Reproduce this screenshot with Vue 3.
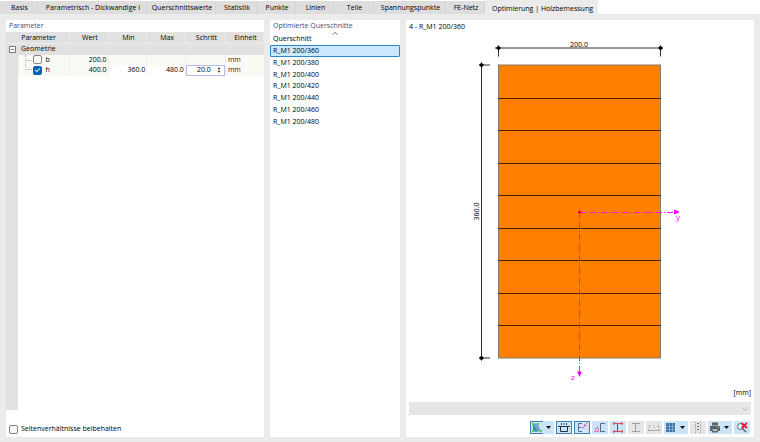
<script setup>
import { ref } from 'vue'

const tabs = [
  'Basis', 'Parametrisch - Dickwandige I', 'Querschnittswerte', 'Statistik', 'Punkte',
  'Linien', 'Teile', 'Spannungspunkte', 'FE-Netz', 'Optimierung | Holzbemessung',
]
const activeTab = ref(9)

const columns = ['Parameter', 'Wert', 'Min', 'Max', 'Schritt', 'Einheit']
const optimizeB = ref(false)
const optimizeH = ref(true)
const step = ref('20.0')
const keepRatio = ref(false)

const sections = [360, 380, 400, 420, 440, 460, 480].map((h) => `R_M1 200/${h}`)
const selected = ref(0)

const shape = { x: 92, y: 31, w: 163, h: 293, layers: 9 }
const joints = Array.from({ length: shape.layers - 1 }, (_, i) =>
  Math.round(shape.y + ((i + 1) * shape.h) / shape.layers) + 0.5)

const tools = [
  { id: 'view', label: 'Ansicht', menu: true, pressed: true },
  { id: 'dims', label: 'Bemaßung', pressed: true },
  { id: 'axes', label: 'Hauptachsen', pressed: true },
  { id: 'centre', label: 'Schubmittelpunkt' },
  { id: 'stress', label: 'Spannungspunkte' },
  { id: 'beam', label: 'Querschnittsteile', disabled: true },
  { id: 'numbers', label: 'Nummerierung', disabled: true },
  { id: 'grid', label: 'Raster', menu: true },
  { id: 'mesh', label: 'Netz', disabled: true },
  { id: 'print', label: 'Drucken', menu: true },
  { id: 'reset', label: 'Zoom zurücksetzen' },
]
</script>

<template>
  <div class="page">
    <nav class="tabs">
      <button v-for="(t, i) in tabs" :key="t" type="button" class="tab" :class="{ active: i === activeTab }" @click="activeTab = i">{{ t }}</button>
    </nav>

    <main class="panels">
      <section class="panel">
        <h2 class="title">Parameter</h2>
        <div class="sheet">
          <table class="grid">
            <colgroup>
              <col class="c-gutter"><col class="c-name"><col class="c-num"><col class="c-num"><col class="c-num"><col class="c-step"><col class="c-unit">
            </colgroup>
            <thead>
              <tr>
                <th v-for="(c, i) in columns" :key="c" :colspan="i === 0 ? 2 : 1">{{ c }}</th>
              </tr>
            </thead>
            <tbody>
              <tr class="group">
                <td class="gutter">
                  <button type="button" class="expander" aria-label="Geometrie einklappen">
                    <svg viewBox="0 0 7 7"><path d="M.5.5h6v6h-6zM2 3.5h3" /></svg>
                  </button>
                </td>
                <th colspan="6">Geometrie</th>
              </tr>
              <tr class="param">
                <td class="gutter"></td>
                <td class="name"><label><i class="branch"></i><input v-model="optimizeB" type="checkbox" class="check">b</label></td>
                <td class="num">200.0</td>
                <td></td>
                <td></td>
                <td></td>
                <td class="unit">mm</td>
              </tr>
              <tr class="param">
                <td class="gutter"></td>
                <td class="name"><label><i class="branch last"></i><input v-model="optimizeH" type="checkbox" class="check">h</label></td>
                <td class="num">400.0</td>
                <td class="num edit">360.0</td>
                <td class="num edit">480.0</td>
                <td class="edit">
                  <div class="spin">
                    <input v-model="step" type="text" aria-label="Schritt">
                    <svg viewBox="0 0 5 7"><path d="M2.500 0 4.500 2.500h-4zM2.500 7 .5 4.500h4z" /></svg>
                  </div>
                </td>
                <td class="unit">mm</td>
              </tr>
            </tbody>
          </table>
          <div class="gutter-rest"></div>
        </div>
        <label class="keep"><input v-model="keepRatio" type="checkbox" class="check">Seitenverhältnisse beibehalten</label>
      </section>

      <section class="panel">
        <h2 class="title">Optimierte Querschnitte</h2>
        <div class="list-head">
          <svg class="sort" viewBox="0 0 6 3"><path d="M.5 2.500 3 .5 5.500 2.500" /></svg>
          Querschnitt
        </div>
        <ul class="list">
          <li v-for="(s, i) in sections" :key="s">
            <button type="button" :class="{ selected: i === selected }" @click="selected = i">{{ s }}</button>
          </li>
        </ul>
      </section>

      <section class="panel">
        <h2 class="caption">4 - R_M1 200/360</h2>
        <svg class="drawing" viewBox="0 0 348 353">
          <rect :x="shape.x + 0.5" :y="shape.y + 0.5" :width="shape.w - 1" :height="shape.h" class="body" />
          <path v-for="y in joints" :key="y" :d="`M${shape.x} ${y}h${shape.w}`" class="joint" />
          <g class="dim">
            <path d="M89 14.500H257M92.500 12V23M254.500 12V23" />
            <path d="M75.500 29V327M73 31.500H84M73 324.500H84" />
            <path class="mark" d="M92.500 12l2.500 2.500-2.500 2.500-2.500-2.500zM254.500 12l2.500 2.500-2.500 2.500-2.500-2.500zM75.500 29l2.500 2.500-2.500 2.500-2.500-2.500zM75.500 322l2.500 2.500-2.500 2.500-2.500-2.500z" />
            <text x="173" y="13" text-anchor="middle">200.0</text>
            <text transform="translate(73 178) rotate(-90)" text-anchor="middle">360.0</text>
          </g>
          <g class="axis">
            <path class="line" d="M173 178.500H268M173.500 178V338" />
            <path class="head" d="M268 176l6 2.500-6 2.500zM171 338h5l-2.500 5.500z" />
            <text x="270" y="186">y</text>
            <text x="165" y="346">z</text>
          </g>
          <circle cx="173.500" cy="178.500" r="1.500" class="origin" />
        </svg>
        <p class="units">[mm]</p>
        <div class="combo">
          <select aria-label="Ergebnis" disabled><option></option></select>
          <svg viewBox="0 0 7 4"><path d="M.5.5l3 3 3-3" /></svg>
        </div>
        <div class="toolbar">
          <button v-for="t in tools" :key="t.id" type="button" class="tool" :class="{ menu: t.menu, pressed: t.pressed }" :disabled="t.disabled" :aria-label="t.label">
            <span class="face">
              <svg viewBox="0 0 12 11">
                <template v-if="t.id === 'view'">
                  <path d="M2 1.500h4.500L10 9.500H2z" fill="#6fa9c6" />
                  <path d="M2 2l5 7.500H2z" fill="#4587a6" />
                  <path d="M1 1h2v2H1zM6 1h2v2H6zM1 8h2v2H1zM9 8h2v2H9z" fill="#4fd34f" />
                </template>
                <template v-else-if="t.id === 'dims'">
                  <path d="M2.500 4v5.500h7V4M0 4.500h12" stroke="#20323e" fill="none" />
                  <path d="M3.500 1v2M6 1v2M8.500 1v2" stroke="#40505c" fill="none" />
                </template>
                <template v-else-if="t.id === 'axes'">
                  <path d="M6 1.500H2.500v8H6M2.500 5.500H5" stroke="#59709a" fill="none" />
                  <path d="M6 5.500h2M8.500 2v3M10 1.500h1.500M8.500 3.500h2" stroke="#dc6fa8" fill="none" />
                </template>
                <template v-else-if="t.id === 'centre'">
                  <path d="M11 1.500H6.500v8H11" stroke="#526b8c" fill="none" />
                  <path d="M3.500 4v3M1.500 6.500h3v3h-3zM0 9.500h1" stroke="#dc7da8" fill="none" />
                </template>
                <template v-else-if="t.id === 'stress'">
                  <path d="M2 1.500h8M2 9.500h8" stroke="#c9505c" fill="none" />
                  <path d="M5.500 2v7" stroke="#6b4954" fill="none" />
                  <path d="M1 .5h2v2H1zM9 .5h2v2H9zM1 8.500h2v2H1zM9 8.500h2v2H9z" fill="#ed4354" />
                </template>
                <path v-else-if="t.id === 'beam'" d="M2 1.500h8M2 9.500h8M5.500 2v7" stroke="#a0a0a0" fill="none" />
                <template v-else-if="t.id === 'numbers'">
                  <path d="M.5 7v2M11.500 7v2M1 8.500h10" stroke="#aaa" fill="none" />
                  <path d="M1.500 3v3M5.500 3v1M6.500 5v1M10.500 3v3" stroke="#aaa" fill="none" />
                </template>
                <template v-else-if="t.id === 'grid'">
                  <path d="M1 1h9v9H1z" fill="#3d76a8" />
                  <path d="M4.500 1v9M7.500 1v9M1 4.500h9M1 7.500h9" stroke="#8fb9d9" stroke-width=".7" fill="none" />
                </template>
                <template v-else-if="t.id === 'mesh'">
                  <path d="M3.500 0v11M8.500 0v11" stroke="#999" stroke-dasharray="1 1" fill="none" />
                  <path d="M5 1.500h2M5 4.500h2M5 7.500h2" stroke="#777" fill="none" />
                </template>
                <template v-else-if="t.id === 'print'">
                  <path d="M3 .5h6v3H3zM1 4h10v5H9V7H3v2H1zM3 7.500h6v3H3z" fill="#5d6468" />
                  <path d="M4 8.500h4M9 5h1" stroke="#d5dadd" fill="none" />
                </template>
                <template v-else>
                  <circle cx="4.500" cy="4.500" r="3" stroke="#59656d" fill="#e8f2fa" />
                  <path d="M6.500 6.500 10 10" stroke="#59656d" stroke-width="1.500" />
                  <path d="M5.500 1 11 6M11 1 5.500 6" stroke="#e5162c" stroke-width="1.700" />
                </template>
              </svg>
            </span>
            <svg v-if="t.menu" class="caret" viewBox="0 0 5 3"><path d="M0 0h5L2.500 3z" /></svg>
          </button>
        </div>
      </section>
    </main>
  </div>
</template>

<style>
body {
  margin: 0;
}
</style>

<style scoped>
.page {
  display: flex;
  flex-direction: column;
  box-sizing: border-box;
  min-height: 100vh;
  background: #ebebeb;
  color: #000;
  font-family: "Open Sans", "Noto Sans", sans-serif;
  font-size: 7px;
  font-weight: 500;
  line-height: 10px;
}
button,
input,
select {
  font: inherit;
  color: inherit;
  margin: 0;
  padding: 0;
  border: 0;
  background: none;
}
.tabs {
  display: grid;
  grid-template-columns: 38px 109px 69px 41px 39px 38px 40px 72px 39px 113px;
  height: 14px;
  background: #fff;
}
.tab {
  box-sizing: border-box;
  margin-top: 1px;
  padding: 1px 0 0 2px;
  border-right: 1px solid #d4d4d4;
  background: #dedede;
  white-space: nowrap;
}
.tab.active {
  margin-top: 0;
  padding-top: 3px;
  border-right: 0;
  background: #ebebeb;
}
.panels {
  flex: 1;
  display: grid;
  grid-template-columns: 258fr 130fr 348fr;
  gap: 6px;
  padding: 6px 6px 5px;
}
.panel {
  display: flex;
  flex-direction: column;
  min-width: 0;
  background: #fff;
}
.title {
  margin: 0;
  padding: 1px 3px;
  font-size: 7px;
  font-weight: 500;
  line-height: 10px;
  color: #354f80;
}
.sheet {
  flex: 1;
  display: flex;
  flex-direction: column;
}
.grid {
  width: 100%;
  table-layout: fixed;
  border-collapse: collapse;
}
.c-gutter { width: 12px; }
.c-name { width: 20%; }
.c-num { width: 15%; }
.c-step { width: 40px; }
.grid th,
.grid td {
  padding: 0;
  font-weight: 500;
}
.grid thead th {
  height: 11px;
  padding-left: 2px;
  background: #e1e1e1;
  border-right: 1px solid #ececec;
  border-bottom: 1px solid #ececec;
}
.group {
  height: 11px;
  background: #e1e1e1;
}
.grid .group th {
  padding-left: 3px;
  text-align: left;
}
.gutter {
  background: #e1e1e1;
}
.expander {
  display: block;
  width: 7px;
  height: 7px;
  margin-left: 3px;
}
.expander svg {
  display: block;
  fill: #fff;
  stroke: #777;
}
.param td {
  height: 10px;
  background: #fafaf5;
  border-right: 1px solid #f0f0ec;
}
.param td.gutter {
  background: #e1e1e1;
}
.param td.edit {
  background: #fff;
}
.grid .num {
  padding-right: 1px;
  text-align: right;
}
.grid .unit {
  padding-left: 2px;
  border-right: 0;
  color: #5a0c18;
}
.name label {
  display: flex;
  align-items: center;
  height: 10px;
}
.branch {
  align-self: stretch;
  width: 7px;
  margin-left: 6px;
  border-left: 1px dotted #c4c4c4;
  background: linear-gradient(#d0d0d0, #d0d0d0) 0 5px / 6px 1px no-repeat;
}
.branch.last {
  height: 5px;
  background-position: 0 4px;
}
.check {
  appearance: none;
  box-sizing: border-box;
  flex: none;
  display: grid;
  place-items: center;
  width: 9px;
  height: 9px;
  margin-right: 3px;
  border: 1px solid #858585;
  border-radius: 2px;
  background: #f8f8f8;
}
.name .check {
  margin-right: 4px;
}
.check:checked {
  border-color: #0a62b8;
  background: #0a62b8;
}
.check:checked::after {
  content: "";
  width: 4px;
  height: 2px;
  margin-bottom: 2px;
  border: solid #cfe0f2;
  border-width: 0 0 1px 1px;
  transform: rotate(-45deg);
}
.spin {
  display: flex;
  align-items: center;
  box-sizing: border-box;
  height: 11px;
  border: 1px solid #bdb9e8;
}
.spin input {
  flex: 1;
  min-width: 0;
  height: 9px;
  padding-right: 6px;
  text-align: right;
}
.spin svg {
  width: 4px;
  height: 6px;
  margin-right: 3px;
  fill: #333;
}
.gutter-rest {
  flex: 1;
  width: 12px;
  background: #e1e1e1;
}
.keep {
  display: flex;
  align-items: center;
  margin: 14px 3px 3px;
}
.list-head {
  position: relative;
  padding: 2px 3px 1px;
}
.sort {
  position: absolute;
  top: 0;
  left: 50%;
  width: 6px;
  height: 3px;
  margin-left: -3px;
  fill: none;
  stroke: #777;
}
.list {
  display: grid;
  grid-auto-rows: 1fr;
  height: 82px;
  margin: 0;
  padding: 0;
  list-style: none;
}
.list li {
  min-height: 0;
}
.list button {
  box-sizing: border-box;
  display: flex;
  align-items: center;
  width: 100%;
  height: 100%;
  padding: 0 2px;
  border: 1px solid transparent;
  border-radius: 1px;
  line-height: 9px;
}
.list .selected {
  border-color: #2b86cc;
  background: #cce8ff;
}
.caption {
  margin: 0;
  padding: 2px 3px 1px;
  font-size: 7px;
  font-weight: 500;
  line-height: 10px;
}
.drawing {
  flex: 1;
  min-height: 0;
  width: 100%;
  font-size: 7px;
}
.body {
  fill: #ff8000;
  stroke: #8b7868;
}
.joint {
  stroke: #4a2200;
  shape-rendering: crispEdges;
}
.dim {
  font-weight: 400;
}
.dim path {
  fill: none;
  stroke: #333;
}
.dim .mark {
  fill: #000;
  stroke: none;
}
.axis .line {
  fill: none;
  stroke: #ff10dc;
  stroke-dasharray: 6 2 1 2;
  shape-rendering: crispEdges;
}
.axis .head {
  fill: #ff00ff;
}
.axis text {
  fill: #ff00ff;
  font-size: 8px;
}
.origin {
  fill: #f00000;
}
.units {
  margin: 0;
  padding: 1px 3px 0;
  text-align: right;
}
.combo {
  display: grid;
  align-items: center;
  height: 13px;
  margin: 4px 3px 0;
  background: #e6e6e6;
}
.combo select,
.combo svg {
  grid-area: 1 / 1;
}
.combo select {
  appearance: none;
  width: 100%;
  height: 13px;
}
.combo svg {
  justify-self: end;
  width: 6px;
  height: 4px;
  margin-right: 3px;
  fill: none;
  stroke: #b4b4b4;
  pointer-events: none;
}
.toolbar {
  display: flex;
  justify-content: flex-end;
  gap: 2px;
  padding: 6px 4px 3px;
}
.tool {
  display: flex;
  align-items: center;
  height: 13px;
  background: #cce4f7;
}
.tool:disabled {
  background: #e6e6e6;
}
.face {
  box-sizing: border-box;
  display: grid;
  place-content: center;
  width: 16px;
  height: 13px;
}
.menu .face {
  width: 13px;
}
.pressed .face {
  border: 1px solid #3f80b0;
}
.pressed.menu .face {
  border-right: 0;
}
.face svg {
  display: block;
  width: 12px;
  height: 11px;
}
.caret {
  width: 5px;
  height: 3px;
  margin: 0 3px;
  fill: #111;
}
</style>
